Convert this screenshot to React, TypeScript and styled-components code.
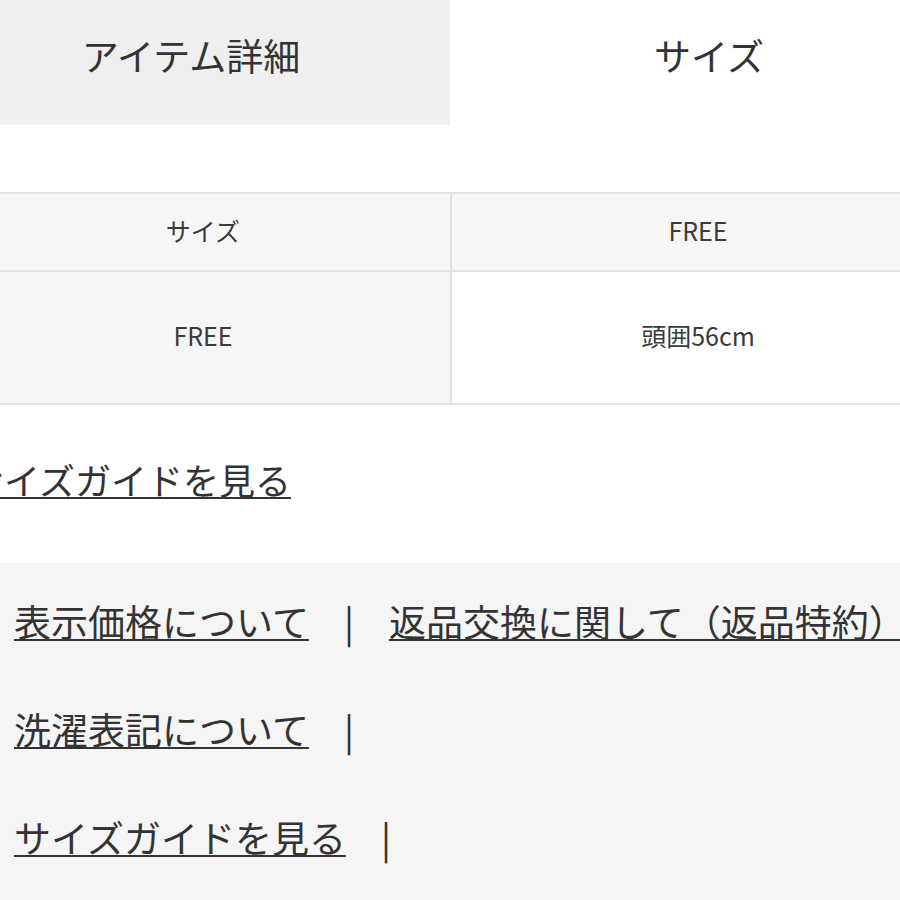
import React from "react";
import styled, { createGlobalStyle } from "styled-components";

const Global = createGlobalStyle`
  html, body { margin: 0; padding: 0; background: #ffffff; overflow: hidden; }
  body {
    width: 900px;
    height: 900px;
    font-family: "Noto Sans CJK JP", "Noto Sans", sans-serif;
    color: #333333;
  }
`;

const Page = styled.div`
  width: 1036px;
  margin-left: -68px;
  display: flex;
  flex-direction: column;
`;

const Tabs = styled.div`
  display: grid;
  grid-template-columns: 1fr 1fr;
  height: 125px;
`;

const Tab = styled.div<{ $active?: boolean }>`
  display: flex;
  align-items: center;
  justify-content: center;
  padding-bottom: 16px;
  background: ${(p) => (p.$active ? "#ffffff" : "#efefef")};
  font-size: 37px;
  color: #333;
`;

const Table = styled.div`
  margin: 67px 24px 0;
  display: grid;
  grid-template-columns: 1fr 1fr;
  border-top: 2px solid #e3e3e3;
  border-bottom: 2px solid #e3e3e3;
`;

const Cell = styled.div<{ $shade?: boolean; $tall?: boolean; $right?: boolean; $top?: boolean }>`
  display: flex;
  align-items: center;
  justify-content: center;
  box-sizing: border-box;
  padding-bottom: 5px;
  height: ${(p) => (p.$tall ? "131px" : "78px")};
  background: ${(p) => (p.$shade ? "#f6f6f6" : "#ffffff")};
  border-left: ${(p) => (p.$right ? "2px solid #e3e3e3" : "none")};
  border-bottom: ${(p) => (p.$top ? "2px solid #e3e3e3" : "none")};
  font-size: 25px;
  color: #3a3a3a;
`;

const GuideRow = styled.div`
  box-sizing: border-box;
  height: 158px;
  display: flex;
  align-items: center;
  padding: 0 0 10px 36px;
`;

const Link = styled.a<{ $size?: number }>`
  flex-shrink: 0;
  font-size: ${(p) => p.$size ?? 37}px;
  color: #333;
  text-decoration: underline;
  text-decoration-thickness: 2px;
  text-underline-offset: 2px;
  white-space: nowrap;
  cursor: pointer;
`;

const Panel = styled.div`
  box-sizing: border-box;
  background: #f5f5f5;
  padding: 4px 0 0 82px;
  height: 360px;
`;

const Row = styled.div`
  height: 108px;
  display: flex;
  align-items: center;
  white-space: nowrap;
`;

const Sep = styled.span`
  flex-shrink: 0;
  display: inline-block;
  width: 80px;
  text-align: center;
  font-size: 37px;
  color: #333;
`;

export default function App() {
  return (
    <>
      <Global />
      <Page>
        <Tabs>
          <Tab>アイテム詳細</Tab>
          <Tab $active>サイズ</Tab>
        </Tabs>
        <Table>
          <Cell $shade $top>サイズ</Cell>
          <Cell $shade $top $right>FREE</Cell>
          <Cell $shade $tall>FREE</Cell>
          <Cell $tall $right>頭囲56cm</Cell>
        </Table>
        <GuideRow>
          <Link $size={36}>サイズガイドを見る</Link>
        </GuideRow>
        <Panel>
          <Row>
            <Link>表示価格について</Link>
            <Sep>|</Sep>
            <Link>返品交換に関して（返品特約）</Link>
            <Sep>|</Sep>
          </Row>
          <Row>
            <Link>洗濯表記について</Link>
            <Sep>|</Sep>
          </Row>
          <Row>
            <Link>サイズガイドを見る</Link>
            <Sep>|</Sep>
          </Row>
        </Panel>
      </Page>
    </>
  );
}
